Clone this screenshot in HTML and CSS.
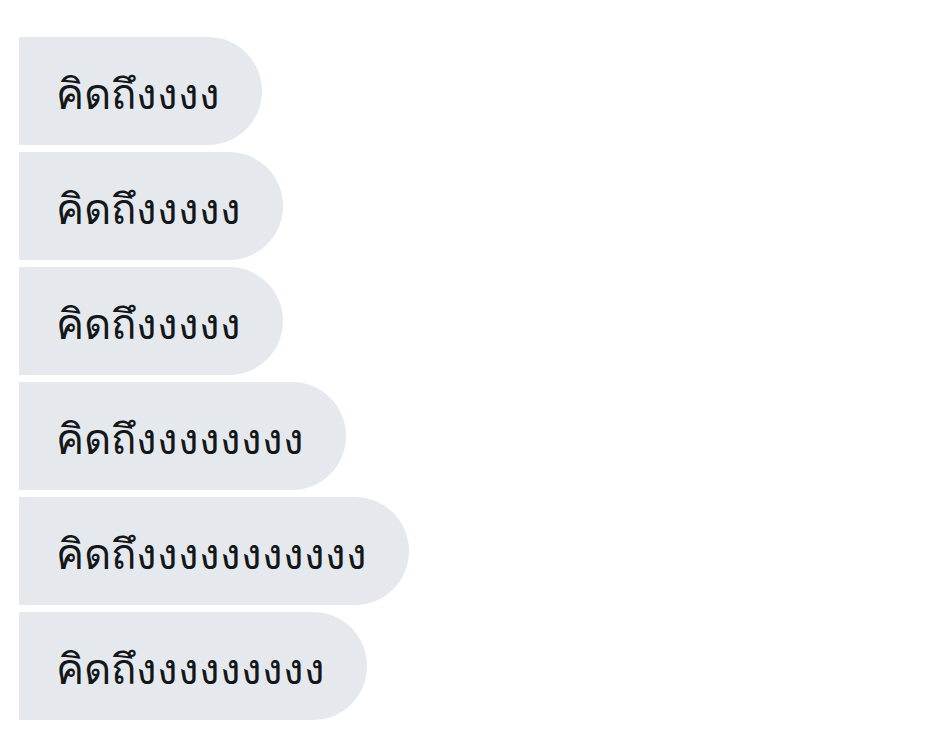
FILE: index.html
```html
<!DOCTYPE html>
<html lang="th">
<head>
<meta charset="utf-8">
<link rel="stylesheet" href="styles.css">
</head>
<body>
<div class="thread">
  <div class="bubble">คิดถึงงงง</div>
  <div class="bubble">คิดถึงงงงง</div>
  <div class="bubble">คิดถึงงงงง</div>
  <div class="bubble">คิดถึงงงงงงงง</div>
  <div class="bubble">คิดถึงงงงงงงงงงง</div>
  <div class="bubble">คิดถึงงงงงงงงง</div>
</div>
</body>
</html>
```
FILE: styles.css
```css
html, body {
  margin: 0;
  background: #ffffff;
}
body {
  padding: 37px 19px;
  font-family: "Noto Sans", "DejaVu Sans", sans-serif;
}
.thread {
  display: flex;
  flex-direction: column;
  align-items: flex-start;
  gap: 7px;
}
.bubble {
  box-sizing: border-box;
  height: 108px;
  display: flex;
  align-items: center;
  padding: 4px 42px 0 37px;
  background: #e5e9ee;
  border-radius: 0 54px 54px 0;
  color: #14171a;
  font-size: 42px;
  line-height: 1;
}
```
